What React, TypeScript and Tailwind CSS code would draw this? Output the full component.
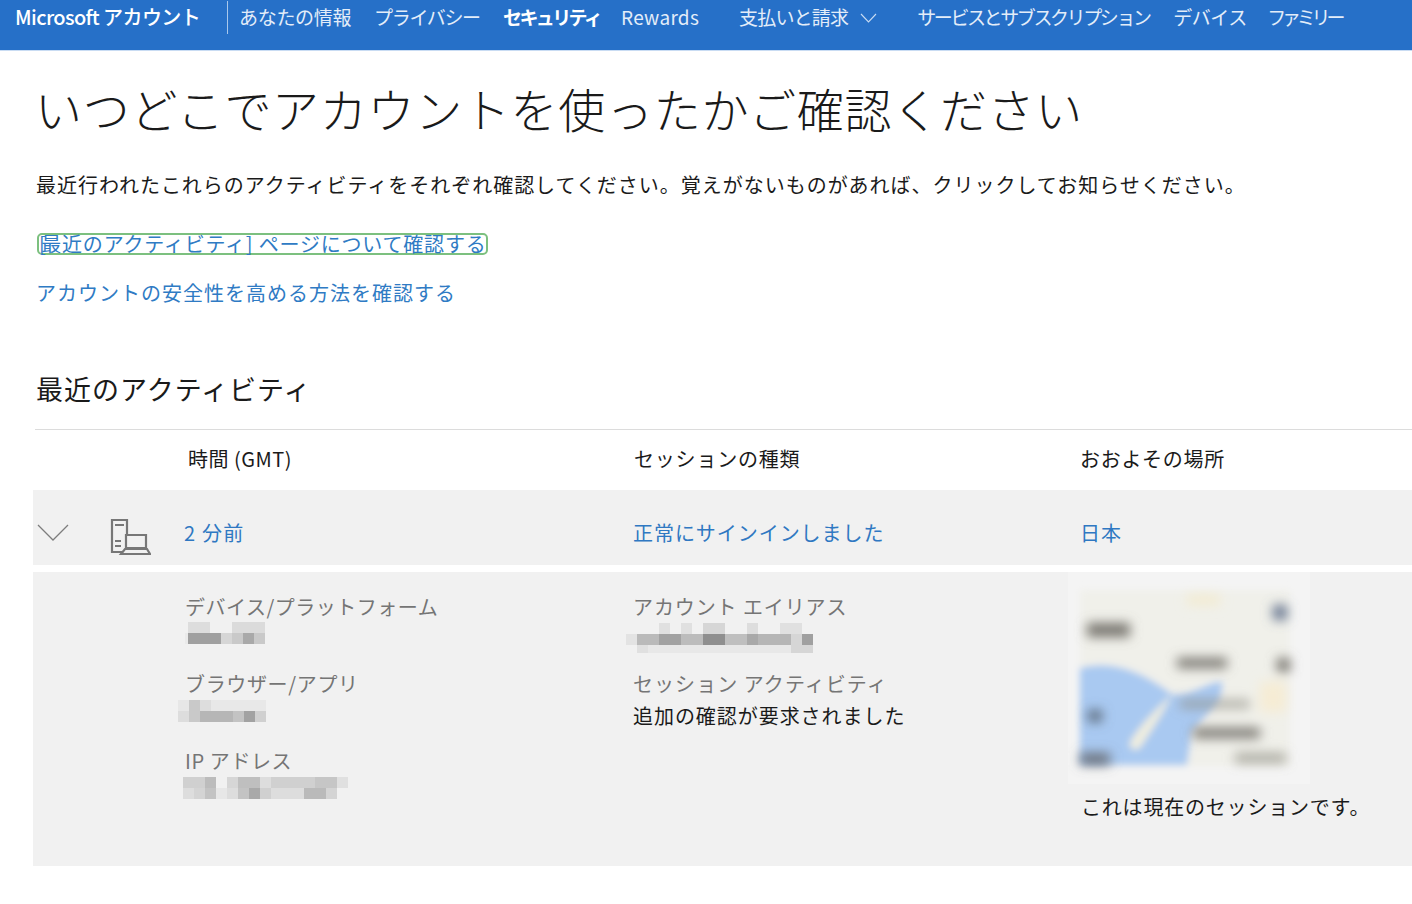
const navItems = [
  { label: 'あなたの情報', width: 'w-[113px]', gap: 'mr-[22px]', tracking: 'tracking-[-0.3px]' },
  { label: 'プライバシー', width: 'w-[106px]', gap: 'mr-[23px]', tracking: 'tracking-[-1.3px]' },
  { label: 'セキュリティ', width: 'w-[95px]', gap: 'mr-[23px]', tracking: 'tracking-[-2.6px]', bold: true },
  { label: 'Rewards', width: 'w-[79px]', gap: 'mr-[39px]', tracking: 'tracking-[0.3px]' },
]

const navItemsRight = [
  { label: 'サービスとサブスクリプション', width: 'w-[256px]', tracking: 'tracking-[-2.4px]' },
  { label: 'デバイス', width: 'w-[94px]', tracking: 'tracking-[-0.5px]' },
  { label: 'ファミリー', width: 'w-[80px]', tracking: 'tracking-[-4.2px]' },
]

type Cell = [number, number, number, number, number]

// モザイク部分: [x, y, w, h, 濃さ]
function Mosaic({ width, height, cells }: { width: number; height: number; cells: Cell[] }) {
  return (
    <svg width={width} height={height} className="block">
      {cells.map(([x, y, w, h, o], i) => (
        <rect key={i} x={x} y={y} width={w} height={h} fill="#6e6e6e" opacity={o} />
      ))}
    </svg>
  )
}

const deviceCells: Cell[] = [
  [3, 0, 22, 11, 0.15], [47, 0, 33, 11, 0.17], [3, 11, 33, 11, 0.62], [36, 11, 11, 11, 0.2],
  [47, 11, 11, 11, 0.3], [58, 11, 11, 11, 0.55], [69, 11, 11, 11, 0.3], [0, 11, 3, 11, 0.05],
]

const browserCells: Cell[] = [
  [0, 0, 11, 11, 0.08], [11, 0, 11, 11, 0.3], [22, 0, 11, 11, 0.15], [33, 0, 55, 11, 0.06],
  [0, 11, 11, 11, 0.15], [11, 11, 11, 11, 0.3], [22, 11, 33, 11, 0.45], [55, 11, 11, 11, 0.35],
  [66, 11, 11, 11, 0.6], [77, 11, 11, 11, 0.25],
]

const ipCells: Cell[] = [
  [0, 0, 22, 11, 0.25], [22, 0, 11, 11, 0.4], [44, 0, 11, 11, 0.2], [55, 0, 22, 11, 0.38],
  [77, 0, 11, 11, 0.15], [88, 0, 44, 11, 0.25], [132, 0, 22, 11, 0.32], [154, 0, 11, 11, 0.12],
  [0, 11, 11, 11, 0.15], [11, 11, 11, 11, 0.22], [22, 11, 11, 11, 0.35], [33, 11, 11, 11, 0.08],
  [44, 11, 11, 11, 0.15], [55, 11, 11, 11, 0.35], [66, 11, 11, 11, 0.55], [77, 11, 11, 11, 0.25],
  [88, 11, 33, 11, 0.15], [121, 11, 22, 11, 0.42], [143, 11, 11, 11, 0.22],
]

const aliasCells: Cell[] = [
  [33, 0, 11, 11, 0.12], [55, 0, 11, 11, 0.12], [77, 0, 22, 11, 0.2], [121, 0, 11, 11, 0.15], [154, 0, 22, 11, 0.12],
  [0, 11, 11, 11, 0.1], [11, 11, 22, 11, 0.42], [33, 11, 22, 11, 0.6], [55, 11, 22, 11, 0.4], [77, 11, 22, 11, 0.75],
  [99, 11, 22, 11, 0.38], [121, 11, 11, 11, 0.55], [132, 11, 33, 11, 0.45], [165, 11, 11, 11, 0.2], [176, 11, 11, 11, 0.62],
  [11, 22, 11, 8, 0.12], [22, 22, 143, 8, 0.06], [165, 22, 22, 8, 0.2],
]

function DeviceIcon() {
  return (
    <svg width="41" height="37" viewBox="0 0 41 37" fill="none" stroke="#777777" strokeWidth="2.2" className="block">
      <path d="M17 16V1H2v32h10" />
      <path d="M5 6h9M5 22h6M5 27h6" />
      <path d="M16 16h20v13H16z" />
      <path d="M11 35l4-5h22l3 5z" />
    </svg>
  )
}

function BlurredMap() {
  return (
    <svg width="242" height="212" viewBox="0 0 242 212" className="block">
      <defs>
        <filter id="blur" x="-10%" y="-10%" width="120%" height="120%">
          <feGaussianBlur stdDeviation="3.5" />
        </filter>
        <filter id="blur-soft" x="-20%" y="-20%" width="140%" height="140%">
          <feGaussianBlur stdDeviation="6" />
        </filter>
      </defs>
      <rect width="242" height="212" fill="#f4f4f4" />
      <g filter="url(#blur)">
        <rect x="12" y="18" width="210" height="176" fill="#f0f0ea" />
        <path d="M12 96C50 86 82 106 104 122C125 125 140 108 155 110L152 128L124 160L119 193H40L12 193z" fill="#a9c9f1" />
        <path d="M104 122C96 140 84 158 72 176C66 180 60 176 62 170C72 152 90 136 104 122z" fill="#eeeddf" />
      </g>
      <g filter="url(#blur-soft)">
        <rect x="119" y="23" width="33" height="10" fill="#f3ebd0" />
        <rect x="192" y="110" width="26" height="30" fill="#f6ecd4" />
        <rect x="19" y="51" width="43" height="14" fill="#77746e" />
        <rect x="109" y="86" width="50" height="10" fill="#77746e" />
        <rect x="205" y="33" width="14" height="15" fill="#66758f" />
        <rect x="209" y="86" width="13" height="14" fill="#77746e" />
        <rect x="20" y="138" width="14" height="12" fill="#5c6a7c" />
        <rect x="112" y="128" width="70" height="8" fill="#8c8a80" opacity="0.7" />
        <rect x="125" y="156" width="67" height="10" fill="#77746e" />
        <rect x="12" y="181" width="30" height="12" fill="#6a6f78" />
        <rect x="167" y="181" width="51" height="10" fill="#8c8a80" opacity="0.7" />
      </g>
    </svg>
  )
}

export default function App() {
  return (
    <div className="h-[904px] overflow-hidden bg-white font-['Noto_Sans_CJK_JP','Noto_Sans',sans-serif] text-[#1a1a1a]">
      <header className="flex h-[51px] items-start border-b border-[#c9dcf3] bg-[#2670c8] pl-[15px] text-white">
        <span className="mt-[3px] w-[212px] whitespace-nowrap text-[20px] font-medium leading-[28px] tracking-[-0.6px]">
          Microsoft アカウント
        </span>
        <span className="mr-[11px] mt-[1px] h-[33px] w-px bg-[#a9c8ec]" />
        {navItems.map((item) => (
          <span
            key={item.label}
            className={`mt-[3px] whitespace-nowrap text-[19px] leading-[28px] ${item.bold ? 'font-bold text-white' : 'text-[#e3edf9]'} ${item.width} ${item.gap} ${item.tracking}`}
          >
            {item.label}
          </span>
        ))}
        <span className="mt-[3px] whitespace-nowrap text-[19px] leading-[28px] tracking-[-0.8px] text-[#e3edf9]">支払いと請求</span>
        <svg width="17" height="10" viewBox="0 0 17 10" fill="none" stroke="#c9dcf3" strokeWidth="1.1" className="ml-[12px] mr-[40px] mt-[13px] shrink-0">
          <path d="M1 1l7.5 8L16 1" />
        </svg>
        {navItemsRight.map((item) => (
          <span
            key={item.label}
            className={`mt-[3px] whitespace-nowrap text-[19px] leading-[28px] text-[#e3edf9] ${item.width} ${item.tracking}`}
          >
            {item.label}
          </span>
        ))}
      </header>

      <main className="pl-[33px]">
        <h1 className="ml-[2px] mt-[26px] whitespace-nowrap text-[47px] font-light leading-[62px] tracking-[0.7px]">
          いつどこでアカウントを使ったかご確認ください
        </h1>
        <p className="ml-[3px] mt-[31px] whitespace-nowrap text-[20px] leading-[30px] tracking-[0.98px]">
          最近行われたこれらのアクティビティをそれぞれ確認してください。覚えがないものがあれば、クリックしてお知らせください。
        </p>
        <div className="ml-[4px] mt-[33px] w-[451px] whitespace-nowrap rounded-[5px] border-2 border-[#7cc07f] text-[20px] leading-[18px] tracking-[0.8px] text-[#2f7bc4]">
          <span className="tracking-[-4.5px]">[</span>最近のアクティビティ] ページについて確認する
        </div>
        <a className="ml-[3px] mt-[23px] block whitespace-nowrap text-[20px] leading-[30px] tracking-[1px] text-[#2f7bc4]">
          アカウントの安全性を高める方法を確認する
        </a>

        <h2 className="ml-[3px] mt-[62px] whitespace-nowrap text-[27px] leading-[38px] tracking-[1px]">最近のアクティビティ</h2>

        <div className="ml-[2px] mt-[21px] border-t border-[#dcdcdc]" />
        <div className="flex h-[60px] items-center pb-[2px] text-[20px]">
          <span className="ml-[155px] w-[446px] whitespace-nowrap tracking-[0.5px]">時間 (GMT)</span>
          <span className="w-[446px] whitespace-nowrap tracking-[0.8px]">セッションの種類</span>
          <span className="whitespace-nowrap tracking-[0.7px]">おおよその場所</span>
        </div>

        <div className="flex h-[75px] items-center bg-[#f1f1f1] pt-[10px] text-[20px] text-[#2f78c2]">
          <svg width="32" height="20" viewBox="0 0 32 20" fill="none" stroke="#7d7d7d" strokeWidth="1.3" className="ml-[4px] shrink-0">
            <path d="M1 2l15 15L31 2" />
          </svg>
          <span className="ml-[41px] mr-[33px] mt-[10px] shrink-0"><DeviceIcon /></span>
          <span className="w-[449px] whitespace-nowrap tracking-[1.2px]">2 分前</span>
          <span className="w-[447px] whitespace-nowrap tracking-[0.95px]">正常にサインインしました</span>
          <span className="whitespace-nowrap tracking-[1px]">日本</span>
        </div>

        <div className="mt-[7px] flex h-[294px] bg-[#f1f1f1] text-[20px] text-[#757575]">
          <div className="ml-[145px] w-[445px] pt-[20px]">
            <p className="ml-[7px] whitespace-nowrap leading-[30px] tracking-[0.5px]">デバイス/プラットフォーム</p>
            <div className="ml-[7px]"><Mosaic width={85} height={22} cells={deviceCells} /></div>
            <p className="ml-[7px] mt-[25px] whitespace-nowrap leading-[30px] tracking-[0.65px]">ブラウザー/アプリ</p>
            <div className="mt-[1px]"><Mosaic width={90} height={22} cells={browserCells} /></div>
            <p className="ml-[7px] mt-[24px] whitespace-nowrap leading-[30px] tracking-[0.6px]">IP アドレス</p>
            <div className="ml-[5px] mt-[1px]"><Mosaic width={168} height={22} cells={ipCells} /></div>
          </div>
          <div className="w-[443px] pt-[20px]">
            <p className="ml-[10px] whitespace-nowrap leading-[30px] tracking-[0.9px]">アカウント エイリアス</p>
            <div className="ml-[3px] mt-[1px]"><Mosaic width={190} height={30} cells={aliasCells} /></div>
            <p className="ml-[10px] mt-[16px] whitespace-nowrap leading-[30px] tracking-[1.05px]">セッション アクティビティ</p>
            <p className="ml-[10px] mt-[2px] whitespace-nowrap leading-[30px] tracking-[0.95px] text-[#1a1a1a]">追加の確認が要求されました</p>
          </div>
          <div className="relative flex-1">
            <div className="absolute left-[2px] top-0"><BlurredMap /></div>
            <p className="relative ml-[15px] mt-[220px] whitespace-nowrap leading-[30px] tracking-[0.8px] text-[#1a1a1a]">これは現在のセッションです。</p>
          </div>
        </div>
      </main>
    </div>
  )
}
